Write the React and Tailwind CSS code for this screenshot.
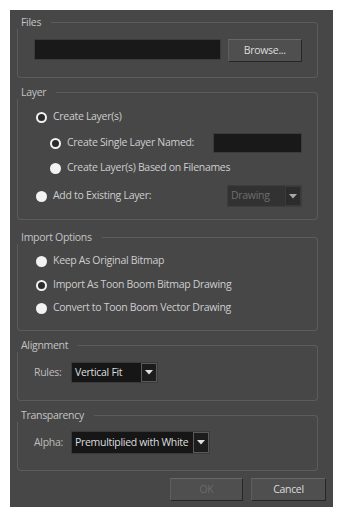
import React from "react";

const font = { fontFamily: '"Open Sans", "Noto Sans", sans-serif' };

const Radio = ({ checked }) =>
  checked ? (
    <span className="w-[11px] h-[11px] rounded-full border-[2px] border-[#f2f2f2] bg-[#2b2b2b] shrink-0" />
  ) : (
    <span className="w-[11px] h-[11px] rounded-full bg-[#f2f2f2] shrink-0" />
  );

const Option = ({ checked, label, className = "" }) => (
  <div className={`flex items-center h-[20px] ${className}`}>
    <Radio checked={checked} />
    <span className="ml-[6px] text-[#cdcdcd]">{label}</span>
  </div>
);

const Group = ({ title, className = "", bodyClass = "", children }) => (
  <div className={className}>
    {/* title row, line runs into the right border */}
    <div className="flex items-center h-[14px]">
      <span className="pl-[4px] pr-[10px] leading-[14px] text-[#c4c4c4]">{title}</span>
      <div className="flex-1 self-end h-[7px] border-t border-r border-[#5c5c5c] rounded-tr-[4px]" />
    </div>
    <div className={`border-l border-r border-b border-[#5c5c5c] rounded-b-[4px] ${bodyClass}`}>
      {children}
    </div>
  </div>
);

const Arrow = ({ dim }) => (
  <svg width="8" height="5" viewBox="0 0 8 5">
    <path d="M0 0 L8 0 L4 4.5 Z" fill={dim ? "#a8a8a8" : "#e0e0e0"} />
  </svg>
);

const Combo = ({ value, width, height = "h-[21px]", disabled }) => (
  <div
    className={`flex ${height} ${width} border ${
      disabled ? "border-[#3d3d3d] bg-[#323232]" : "border-[#3a3a3a] bg-[#161616]"
    }`}
  >
    <div
      className={`flex-1 flex items-center pl-[3px] whitespace-nowrap overflow-hidden ${
        disabled ? "text-[#6e6e6e]" : "text-[#dedede]"
      }`}
    >
      {value}
    </div>
    <div
      className={`w-[16px] flex items-center justify-center border ${
        disabled ? "border-[#3a3a3a] bg-[#2c2c2c]" : "border-[#5a5a5a] bg-[#1c1c1c]"
      }`}
    >
      <Arrow dim={disabled} />
    </div>
  </div>
);

const Button = ({ children, disabled, className = "" }) => (
  <button
    className={`h-[23px] flex items-center justify-center bg-[#4f4f4f] border border-t-[#676767] border-l-[#5e5e5e] border-r-[#262626] border-b-[#262626] ${
      disabled ? "text-[#6a6a6a]" : "text-[#dcdcdc]"
    } ${className}`}
  >
    {children}
  </button>
);

export default function App() {
  return (
    <div
      className="w-[343px] h-[518px] bg-white pt-[10px] pl-[10px] text-[10.5px] tracking-[-0.3px]"
      style={font}
    >
      <div className="w-[323px] h-[497px] bg-[#474747] pt-[5px] pl-[7px] pr-[7px] flex flex-col">
        <div className="pr-[8px]">
          {/* FILES */}
          <Group title="Files" bodyClass="h-[49px] pt-[10px] pl-[16px] pr-[15px]">
            <div className="flex items-start gap-[7px]">
              <div className="w-[188px] h-[21px] bg-[#191919] border border-[#3c3c3c]" />
              <Button className="w-[75px] h-[22px]">Browse...</Button>
            </div>
          </Group>

          {/* LAYER */}
          <Group title="Layer" className="mt-[7px]" bodyClass="h-[121px] pt-[8px] pl-[18px] pr-[15px]">
            <Option checked label="Create Layer(s)" />
            <div className="flex items-center justify-between mt-[6px] pl-[14px]">
              <Option checked label="Create Single Layer Named:" />
              <div className="w-[89px] h-[20px] bg-[#191919] border border-[#3c3c3c]" />
            </div>
            <Option label="Create Layer(s) Based on Filenames" className="mt-[5px] pl-[14px]" />
            <div className="flex items-center justify-between mt-[7px]">
              <Option label="Add to Existing Layer:" />
              <Combo value="Drawing" width="w-[75px]" height="h-[22px]" disabled />
            </div>
          </Group>

          {/* IMPORT OPTIONS */}
          <Group title="Import Options" className="mt-[10px]" bodyClass="h-[87px] pt-[7px] pl-[18px]">
            <Option label="Keep As Original Bitmap" />
            <Option checked label="Import As Toon Boom Bitmap Drawing" className="mt-[4px]" />
            <Option label="Convert to Toon Boom Vector Drawing" className="mt-[3px]" />
          </Group>

          {/* ALIGNMENT */}
          <Group title="Alignment" className="mt-[7px]" bodyClass="h-[49px] pt-[10px] pl-[16px]">
            <div className="flex items-center">
              <span className="w-[37px] text-[#bdbdbd]">Rules:</span>
              <Combo value="Vertical Fit" width="w-[87px]" />
            </div>
          </Group>

          {/* TRANSPARENCY */}
          <Group title="Transparency" className="mt-[7px]" bodyClass="h-[49px] pt-[9px] pl-[16px]">
            <div className="flex items-center">
              <span className="w-[37px] text-[#bdbdbd]">Alpha:</span>
              <Combo value="Premultiplied with White" width="w-[139px]" height="h-[23px]" />
            </div>
          </Group>
        </div>

        <div className="flex justify-end gap-[8px] mt-[7px]">
          <Button disabled className="w-[73px]">OK</Button>
          <Button className="w-[75px]">Cancel</Button>
        </div>
      </div>
    </div>
  );
}
